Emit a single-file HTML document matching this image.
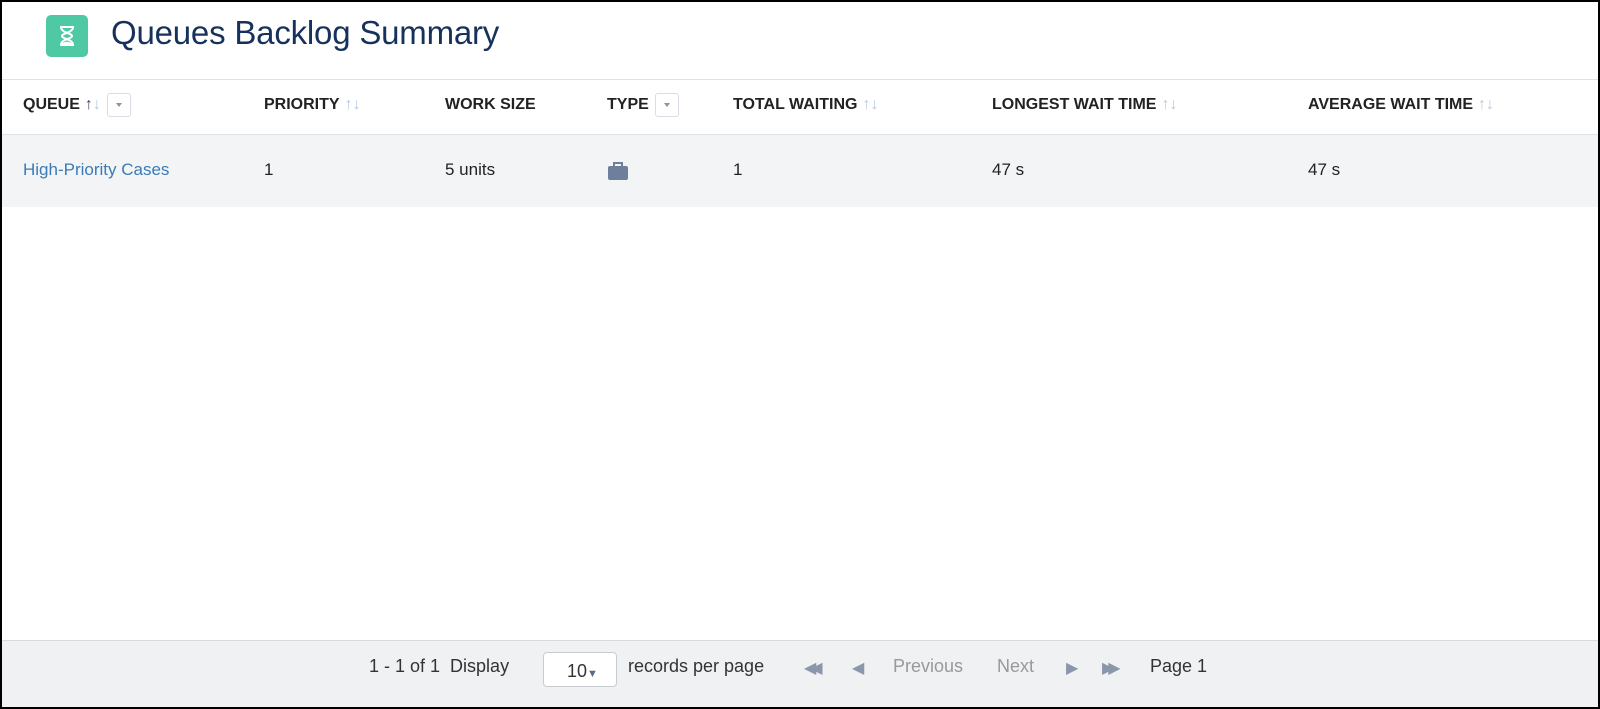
<!DOCTYPE html>
<html><head><meta charset="utf-8"><style>
*{box-sizing:border-box;margin:0;padding:0}
body{width:1600px;height:709px;background:#000;font-family:"Liberation Sans",sans-serif;overflow:hidden}
.frame{position:absolute;left:2px;top:2px;width:1596px;height:705px;background:#fff;overflow:hidden}
.icon{position:absolute;left:44px;top:13px;width:42px;height:42px;background:#4fc8a4;border-radius:5px}
.title{position:absolute;left:109px;top:12px;font-size:33px;color:#16325c;letter-spacing:-0.2px}
.hl{position:absolute;left:0;width:100%;height:1px;background:#dfe2e6}
.h{position:absolute;top:91px;height:24px;display:flex;align-items:center;font-size:16px;font-weight:bold;color:#222;white-space:nowrap}
.s{color:#b8c8e4;font-weight:normal;font-size:16px;margin-left:5px}
.s b{color:#3c4a5e;font-weight:normal}
.dd{display:inline-block;width:24px;height:24px;border:1px solid #d8dde6;border-radius:3px;margin-left:6px;position:relative}
.dd:after{content:"";position:absolute;left:8px;top:9px;border:3px solid transparent;border-top:4px solid #8a94a6}
.row{position:absolute;left:0;top:133px;width:100%;height:72px;background:#f3f4f6}
.d{position:absolute;top:158px;font-size:17px;color:#16325c}
.foot{position:absolute;left:0;top:638px;width:100%;height:70px;background:#f0f1f2;border-top:1px solid #d8dbde}
.f{position:absolute;top:654px;font-size:18px;color:#333;white-space:nowrap}
.g{color:#999}
</style></head><body><div class="frame">
<div class="icon"><svg width="42" height="42" viewBox="0 0 42 42"><path d="M14 12h14M14 30h14M15 12c0 6 11 6 11 9s-11 3-11 9M27 12c0 6-11 6-11 9s11 3 11 9" stroke="#fff" stroke-width="2" fill="none"/><path d="M16 29c2-3 8-3 10 0z" fill="#fff"/></svg></div>
<div class="title">Queues Backlog Summary</div>
<div class="hl" style="top:77px"></div>
<div class="h" style="left:21px">QUEUE<span class="s"><b>↑</b>↓</span><span class="dd"></span></div>
<div class="h" style="left:262px">PRIORITY<span class="s">↑↓</span></div>
<div class="h" style="left:443px">WORK SIZE</div>
<div class="h" style="left:605px">TYPE<span class="dd"></span></div>
<div class="h" style="left:731px">TOTAL WAITING<span class="s">↑↓</span></div>
<div class="h" style="left:990px">LONGEST WAIT TIME<span class="s">↑↓</span></div>
<div class="h" style="left:1306px">AVERAGE WAIT TIME<span class="s">↑↓</span></div>
<div class="hl" style="top:132px"></div>
<div class="row"></div>
<div class="d" style="left:21px;color:#3a7bb8">High-Priority Cases</div>
<div class="d" style="left:262px;color:#222">1</div>
<div class="d" style="left:443px;color:#222">5 units</div>
<div style="position:absolute;left:605px;top:159px"><svg width="22" height="20" viewBox="0 0 22 20"><path d="M7 5V2h8v3" stroke="#6d7f9b" stroke-width="2" fill="none"/><rect x="1" y="5" width="20" height="14" rx="2" fill="#6d7f9b"/></svg></div>
<div class="d" style="left:731px;color:#222">1</div>
<div class="d" style="left:990px;color:#222">47 s</div>
<div class="d" style="left:1306px;color:#222">47 s</div>
<div class="foot"></div>
<div class="f" style="left:367px">1 - 1 of 1&nbsp; Display</div>
<div style="position:absolute;left:541px;top:650px;width:74px;height:35px;background:#fff;border:1px solid #c8ccd0;border-radius:4px;font-size:18px;color:#333;padding:8px 0 0 23px">10<span style="font-size:11px;color:#5a6b85">▼</span></div>
<div class="f" style="left:626px">records per page</div>
<div class="f" style="left:802px;color:#8a97ab;font-size:16px;top:656px;letter-spacing:-6px">◀◀</div>
<div class="f" style="left:850px;color:#8a97ab;font-size:16px;top:656px">◀</div>
<div class="f g" style="left:891px">Previous</div>
<div class="f g" style="left:995px">Next</div>
<div class="f" style="left:1064px;color:#8a97ab;font-size:16px;top:656px">▶</div>
<div class="f" style="left:1100px;color:#8a97ab;font-size:16px;top:656px;letter-spacing:-6px">▶▶</div>
<div class="f" style="left:1148px">Page 1</div>
</div></body></html>
